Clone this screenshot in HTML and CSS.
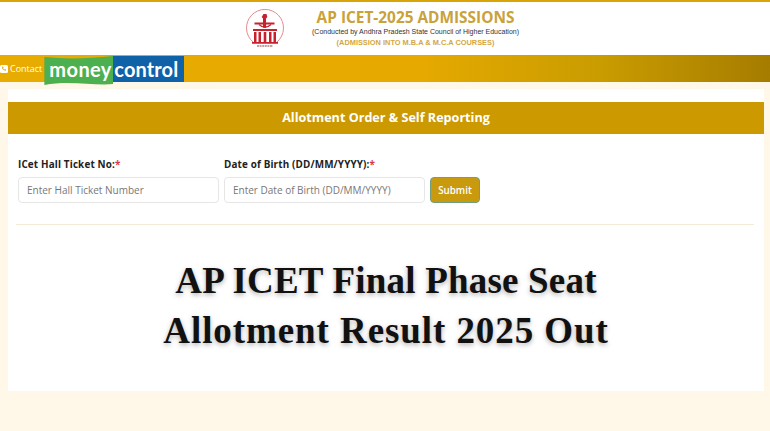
FILE: index.html
```html
<!DOCTYPE html>
<html lang="en">
  <head>
    <meta charset="UTF-8" />
    <title>AP ICET-2025 Admissions</title>
    <link rel="stylesheet" href="styles.css">
  </head>
  <body>
    <header class="site-header">
      <!-- APSCHE emblem -->
      <svg class="emblem" width="40" height="40" viewBox="0 0 40 40">
        <path d="M8 33 A18.5 18.5 0 1 1 32 33" fill="none" stroke="#e58a90" stroke-width="1"/>
        <path d="M18.500 5 h3 l.8 3 -1.300 1.500 v4 h8.500 v2 h-8.500 v3 h-3 v-3 h-8.500 v-2 h8.500 v-4 l-1.300 -1.500z" fill="#c8202c"/>
        <path d="M14 15.500 q6 5.500 12 0" fill="none" stroke="#c8202c" stroke-width="1.300"/>
        <path d="M8 20 h24 v2 h-24z M9 23 h2.500 v10 h-2.500z M13.500 23 h2.500 v10 h-2.500z M18.700 23 h2.600 v10 h-2.600z M24 23 h2.500 v10 h-2.500z M28.500 23 h2.500 v10 h-2.500z M7 33 h26 v1.800 h-26z" fill="#c8202c"/>
        <path d="M12 37 h16" stroke="#b98080" stroke-width="1.400" stroke-dasharray="2 .6"/>
      </svg>
      <div class="header-text">
        <h1>AP ICET-2025 ADMISSIONS</h1>
        <p class="council">(Conducted by Andhra Pradesh State Council of Higher Education)</p>
        <p class="courses">(ADMISSION INTO M.B.A &amp; M.C.A COURSES)</p>
      </div>
    </header>

    <nav class="top-nav">
      <svg class="phone" width="8" height="8" viewBox="0 0 8 8">
        <rect width="8" height="8" rx="1.500" fill="#fff"/>
        <path d="M2 1.800 l1 -.3 .6 1.300 -.6 .5 c.3 .7 .8 1.100 1.400 1.400 l.5 -.6 1.200 .6 -.3 1 c-2 .2 -4 -1.800 -3.800 -3.900z" fill="#e5a800"/>
      </svg>
      <a href="#" class="nav-link">Contact</a>
      <div class="mc-logo">
        <span class="mc-money">money</span><span class="mc-control">control</span>
      </div>
    </nav>

    <main class="card">
      <h2 class="card-title">Allotment Order &amp; Self Reporting</h2>
      <form class="ticket-form">
        <label class="field field-ticket">
          <span class="field-label">ICet Hall Ticket No:<em>*</em></span>
          <input type="text" placeholder="Enter Hall Ticket Number" />
        </label>
        <label class="field field-dob">
          <span class="field-label">Date of Birth (DD/MM/YYYY):<em>*</em></span>
          <input type="text" placeholder="Enter Date of Birth (DD/MM/YYYY)" />
        </label>
        <button type="button">Submit</button>
      </form>
      <hr class="divider" />
      <p class="headline">
        <span class="line-one">AP ICET Final Phase Seat</span>
        <span class="line-two">Allotment Result 2025 Out</span>
      </p>
    </main>
  </body>
</html>
```

FILE: styles.css
```css
html {
  height: 100%;
}
body {
  margin: 0;
  height: 431px;
  overflow: hidden;
  background-color: #fff8e8;
  font-family: "Open Sans", "Noto Sans", Arial, sans-serif;
}

/* header */
.site-header {
  height: 53px;
  border-top: 2px solid #d9a406;
  background-color: #fff;
  display: flex;
  justify-content: center;
  align-items: center;
  gap: 27px;
  padding-right: 6px;
}
.emblem {
  flex: none;
}
.header-text {
  width: 207px;
  padding-bottom: 2px;
  text-align: center;
}
.header-text h1 {
  margin: 0;
  font-size: 15.4px;
  line-height: 17px;
  font-weight: 700;
  color: #c9a23a;
  white-space: nowrap;
}
.council {
  margin: 1px 0 0;
  font-family: "Liberation Sans", Arial, sans-serif;
  font-size: 7px;
  line-height: 10px;
  color: #333;
  white-space: nowrap;
}
.courses {
  margin: 2px 0 0;
  font-family: "Liberation Sans", Arial, sans-serif;
  font-size: 7.4px;
  line-height: 8px;
  font-weight: 700;
  color: #d3a73f;
  white-space: nowrap;
}

/* nav bar */
.top-nav {
  height: 27px;
  display: flex;
  align-items: center;
  background: linear-gradient(90deg, #e8ab00 0%, #e5a900 55%, #c99c00 78%, #a67c00 100%);
}
.phone {
  margin-right: 2px;
}
.nav-link {
  color: #fff;
  font-size: 9px;
  text-decoration: none;
}
.mc-logo {
  display: flex;
  align-self: flex-start;
  margin: 1px 0 0 2px;
  font-family: "Lato", "Open Sans", sans-serif;
  font-weight: 700;
  font-size: 20px;
  line-height: 27px;
  color: #fff;
}
.mc-money {
  width: 69px;
  height: 29px;
  box-sizing: border-box;
  padding-left: 5px;
  background-color: #4caf50;
  letter-spacing: 0.4px;
  clip-path: path("M0 1 C20 3 42 3 69 0 V28 C50 30 25 24 0 29 Z");
}
.mc-control {
  width: 71px;
  height: 26px;
  box-sizing: border-box;
  padding-left: 1px;
  background-color: #0f62a8;
  letter-spacing: 0.1px;
}

/* main card */
.card {
  margin: 7px 6px 0 8px;
  height: 302px;
  background-color: #fff;
  padding-top: 13px;
  box-sizing: border-box;
}
.card-title {
  margin: 0;
  height: 32px;
  background-color: #cc9a00;
  color: #fff;
  font-size: 12.6px;
  font-weight: 700;
  line-height: 32px;
  text-align: center;
}
.ticket-form {
  display: flex;
  align-items: flex-end;
  gap: 5px;
  padding: 23px 10px 0;
}
.field {
  display: block;
  width: 201px;
}
.field-label {
  display: block;
  font-size: 9.9px;
  font-weight: 700;
  line-height: 14px;
  letter-spacing: 0.15px;
  color: #222;
  margin-bottom: 6px;
  white-space: nowrap;
}
.field-label em {
  color: #dc3545;
  font-style: normal;
}
.field input {
  display: block;
  width: 100%;
  height: 26px;
  box-sizing: border-box;
  padding: 0 8px;
  border: 1px solid #e6e6e6;
  border-radius: 4px;
  font-family: inherit;
  font-size: 10px;
  background-color: #fff;
}
.field input::placeholder {
  color: #777;
}
button {
  height: 26px;
  width: 50px;
  padding: 0;
  background-color: #c99a0e;
  border: 1px solid #6f9f7f;
  border-radius: 4px;
  color: #fff;
  font-family: inherit;
  font-size: 9.8px;
  font-weight: 600;
}
.divider {
  margin: 21px 10px 0 8px;
  border: none;
  border-top: 1px solid #f3ead8;
}

/* big overlay headline */
.headline {
  margin: 31px 0 0;
  text-align: center;
  font-family: "Liberation Serif", "Times New Roman", serif;
  font-weight: 700;
  font-size: 37px;
  line-height: 50px;
  color: #111;
  text-shadow: 0 2px 5px rgba(0, 0, 0, 0.3);
}
.line-one,
.line-two {
  display: block;
}
.line-one {
  letter-spacing: 0.2px;
}
.line-two {
  letter-spacing: 0.92px;
}
```
